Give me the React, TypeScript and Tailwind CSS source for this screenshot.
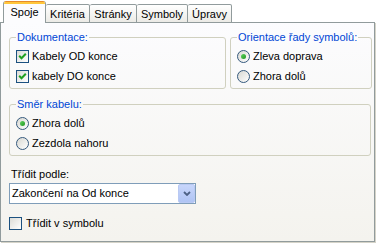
import React from 'react';

const tabs = [
  { label: 'Spoje', w: 'w-[43px]', active: true },
  { label: 'Kritéria', w: 'w-[44px]', active: false },
  { label: 'Stránky', w: 'w-[47px]', active: false },
  { label: 'Symboly', w: 'w-[51px]', active: false },
  { label: 'Úpravy', w: 'w-[44px]', active: false },
];

function CheckBox({ on }: { on: boolean }) {
  return (
    <span className="w-[13px] h-[13px] shrink-0 border border-[#1c5180] bg-gradient-to-br from-[#dcdcd7] to-white flex items-center justify-center">
      {on && (
        <svg width="9" height="9" viewBox="0 0 9 9">
          <path d="M1.2 3.8 L3.5 6.2 L7.8 1.8" stroke="#21a121" strokeWidth="2" fill="none" />
        </svg>
      )}
    </span>
  );
}

function Radio({ on }: { on: boolean }) {
  return (
    <span className="w-[13px] h-[13px] shrink-0 rounded-full border border-[#35597d] bg-gradient-to-br from-[#d8d8d2] to-white flex items-center justify-center">
      {on && <span className="w-[5px] h-[5px] rounded-full bg-gradient-to-br from-[#5fd35f] to-[#1e961e]" />}
    </span>
  );
}

function Group({ title, className, children }: { title: string; className: string; children: React.ReactNode }) {
  return (
    <fieldset className={`border border-[#d0d0bf] rounded-[3px] px-[6px] pt-[2px] pb-[2px] ${className}`}>
      <legend className="px-px text-[#0046d5] leading-[13px]">{title}</legend>
      {children}
    </fieldset>
  );
}

function Row({ children }: { children: React.ReactNode }) {
  return <div className="h-[20px] flex items-center gap-[3px]">{children}</div>;
}

export default function App() {
  return (
    <div className="w-[378px] h-[244px] bg-white text-black text-[11px] leading-[13px] font-['Liberation_Sans',Arial,sans-serif] overflow-hidden">
      <div className="flex items-end h-[23px] pl-[3px] relative z-10 -mb-px">
        {tabs.map((t) =>
          t.active ? (
            <div
              key={t.label}
              className={`${t.w} h-[22px] rounded-t-[3px] overflow-hidden border-x border-[#919b9c] bg-[#fcfcfe] flex flex-col`}
            >
              <div className="h-px bg-[#e68b2c]" />
              <div className="h-[2px] bg-[#ffc73c]" />
              <div className="flex-1 flex items-center justify-center pb-[2px]">{t.label}</div>
            </div>
          ) : (
            <div
              key={t.label}
              className={`${t.w} h-[19px] rounded-t-[2px] border-t border-r border-b border-[#919b9c] bg-gradient-to-b from-white to-[#ecebe6] flex items-center justify-center pt-px`}
            >
              {t.label}
            </div>
          )
        )}
      </div>

      <div className="w-[375px] h-[220px] border border-[#919b9c] bg-gradient-to-b from-[#fcfcfe] to-[#f4f3ee] pl-[8px] pr-[2px] pt-[8px] shadow-[1px_1px_0_#d5d3c8]">
        <div className="flex gap-[4px]">
          <Group title="Dokumentace:" className="w-[217px]">
            <Row>
              <CheckBox on />
              <span>Kabely OD konce</span>
            </Row>
            <Row>
              <CheckBox on />
              <span>kabely DO konce</span>
            </Row>
          </Group>
          <Group title="Orientace řady symbolů:" className="w-[142px]">
            <Row>
              <Radio on />
              <span>Zleva doprava</span>
            </Row>
            <Row>
              <Radio on={false} />
              <span>Zhora dolů</span>
            </Row>
          </Group>
        </div>

        <Group title="Směr kabelu:" className="mt-[9px] w-[362px]">
          <Row>
            <Radio on />
            <span>Zhora dolů</span>
          </Row>
          <Row>
            <Radio on={false} />
            <span>Zezdola nahoru</span>
          </Row>
        </Group>

        <div className="mt-[12px] pl-[2px]">Třídit podle:</div>

        <div className="mt-[2px] w-[187px] h-[21px] border border-[#7f9db9] bg-white flex items-center pl-[2px]">
          <span className="flex-1">Zakončení na Od konce</span>
          <span className="w-[17px] h-[19px] rounded-[2px] border border-[#b9c9f3] bg-gradient-to-b from-[#c8d6fb] to-[#afc4f4] flex items-center justify-center">
            <svg width="8" height="5" viewBox="0 0 8 5">
              <path d="M1 1 L4 4 L7 1" stroke="#4d6185" strokeWidth="1.8" fill="none" />
            </svg>
          </span>
        </div>

        <div className="mt-[10px] h-[19px] flex items-center gap-[4px]">
          <CheckBox on={false} />
          <span>Třídit v symbolu</span>
        </div>
      </div>
    </div>
  );
}
